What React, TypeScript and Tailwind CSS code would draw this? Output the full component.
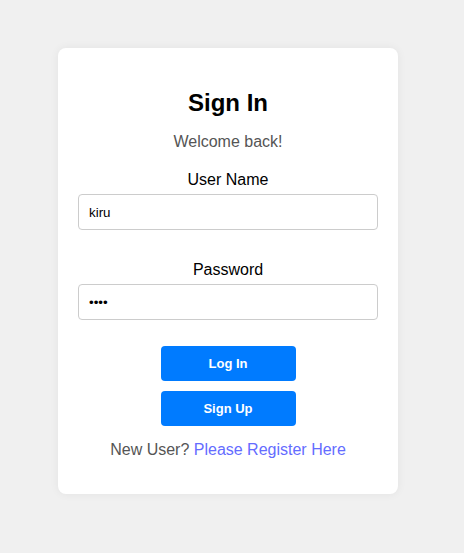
export default function App() {
  return (
    <div className="min-h-[553px] bg-[#f0f0f0] pl-[58px] pt-[48px] font-['Liberation_Sans',Arial,sans-serif]">
      <div className="flex w-[340px] flex-col items-center rounded-lg bg-white px-5 pb-[35px] pt-5 text-center shadow-[0_0_10px_rgba(0,0,0,0.06)]">
        <h2 className="mt-[21px] text-2xl font-bold leading-[27px] text-black">Sign In</h2>
        <p className="mt-[17px] text-base leading-[18px] text-[#555]">Welcome back!</p>

        <label className="mt-[20px] text-base leading-[18px] text-black">User Name</label>
        <input
          type="text"
          defaultValue="kiru"
          className="mt-[5px] h-9 w-full rounded border border-[#ccc] px-[10px] text-[13.33px] text-black outline-none"
        />

        <label className="mt-[31px] text-base leading-[18px] text-black">Password</label>
        <input
          type="password"
          defaultValue="kiru"
          className="mt-[5px] h-9 w-full rounded border border-[#ccc] px-[10px] text-[13.33px] text-black outline-none"
        />

        <button className="mt-[26px] h-[35px] w-[135px] rounded bg-[#007bff] text-[13px] font-bold text-white">
          Log In
        </button>
        <button className="mt-[10px] h-[35px] w-[135px] rounded bg-[#007bff] text-[13px] font-bold text-white">
          Sign Up
        </button>

        <p className="mt-[15px] text-base leading-[18px] text-[#555]">
          New User? <a className="text-[#646cff]">Please Register Here</a>
        </p>
      </div>
    </div>
  );
}
